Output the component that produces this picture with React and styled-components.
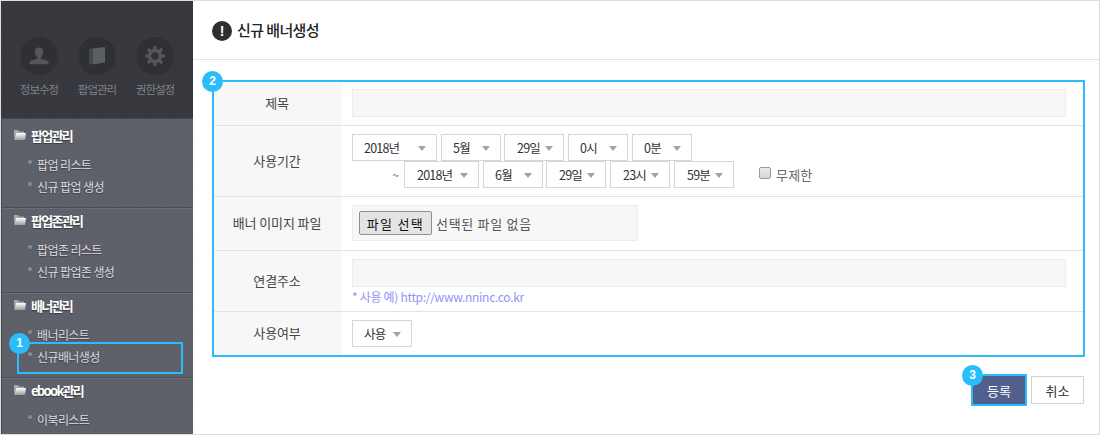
import React from "react";
import styled, { createGlobalStyle } from "styled-components";

const Global = createGlobalStyle`
  html, body { margin: 0; padding: 0; background: #fff; }
  * { box-sizing: border-box; }
  body { font-family: "Noto Sans CJK KR", "Noto Sans", sans-serif; }
`;

const Frame = styled.div`
  width: 1100px; height: 435px; display: flex; overflow: hidden;
  border: 1px solid #dedede; background: #fff;
`;

const Sidebar = styled.aside`
  width: 192px; flex: none; display: flex; flex-direction: column; overflow: hidden;
  background: #5d5f69;
`;

const Profile = styled.div`
  height: 117px; flex: none; padding: 36px 0 0 19px; display: flex; gap: 20px;
  background-color: #37383d;
  background-image: radial-gradient(#3c3d42 0.7px, transparent 0.8px);
  background-size: 3px 3px;
`;

const ProfileLink = styled.div`
  width: 38px; display: flex; flex-direction: column; align-items: center; gap: 5px;
`;

const IconDisc = styled.div`
  width: 38px; height: 38px; border-radius: 50%; background: #2f3034;
  display: flex; align-items: center; justify-content: center;
`;

const ProfileLabel = styled.span`
  font-size: 11.5px; line-height: 18px; letter-spacing: -1px; color: #7f828b; white-space: nowrap;
`;

const Nav = styled.nav`
  flex: 1; border-left: 1px solid #45464c; border-top: 1px solid #45464c;
  background-color: #5d5f69;
  background-image: radial-gradient(#62646e 0.7px, transparent 0.8px);
  background-size: 3px 3px;
`;

const SectionTitle = styled.h3`
  margin: 0; height: 18px; display: flex; align-items: center; gap: 5px;
  font-size: 13px; font-weight: 700; letter-spacing: -1.7px; color: #fff;
  text-shadow: 0 1px 1px rgba(0,0,0,.4);
`;

const ItemList = styled.ul`
  list-style: none; margin: 9px 0 0; padding: 0 0 0 16px;
`;

const Section = styled.section`
  height: 85px; padding: 3px 0 0 12px; border-bottom: 1px solid #4a4b53;
  box-shadow: 0 1px 0 #6b6d77;
  &:first-child { height: 89px; padding-top: 7px; }
`;

const Item = styled.li`
  position: relative; height: 22px; display: flex; align-items: center; padding-left: 7px;
  font-size: 12px; letter-spacing: -0.6px; color: #dcdcdf;
  text-shadow: 0 1px 1px rgba(0,0,0,.35);
  &::before {
    content: ""; position: absolute; left: -2px; top: 7px;
    width: 4px; height: 4px; border-radius: 50%; background: #8b8c94;
  }
`;

const Highlight = styled.span`
  position: absolute; left: -13px; top: -3px; width: 166px; height: 32px;
  border: 2px solid #29bdfb;
`;

const Badge = styled.span`
  position: absolute; width: 21px; height: 21px; border-radius: 50%;
  background: #29bdfb; color: #fff; font: 700 12px/21px "Liberation Sans", sans-serif;
  text-align: center; z-index: 2; text-shadow: none; letter-spacing: 0;
`;

const Main = styled.main`
  flex: 1; min-width: 0; display: flex; flex-direction: column;
`;

const Header = styled.header`
  height: 59px; flex: none; border-bottom: 1px solid #e3e3e3; padding: 20px 0 0 19px;
  display: flex; align-items: flex-start; gap: 5px;
`;

const AlertIcon = styled.span`
  width: 20px; height: 20px; border-radius: 50%; background: #2f2f2f; color: #fff;
  font: 700 14px/20px "Liberation Sans", sans-serif; text-align: center;
`;

const Title = styled.h1`
  margin: -1px 0 0; font-size: 15px; line-height: 20px; font-weight: 500; letter-spacing: -0.6px; color: #222;
`;

const FormBox = styled.div`
  position: relative; margin: 20px 14px 0 19px; height: 277px; border: 2px solid #29bdfb;
`;

const Row = styled.div`
  display: flex; height: ${p => p.$h}px; border-bottom: ${p => p.$last ? "none" : "1px solid #e3e3e3"};
`;

const Label = styled.div`
  width: 128px; flex: none; background: #f7f7f7; display: flex; align-items: center; justify-content: center;
  padding: 0 2px 2px 0;
  font-size: 13px; color: #444; letter-spacing: -0.1px;
`;

const Field = styled.div`
  flex: 1; min-width: 0; padding: ${p => p.$pad ?? 8}px 17px 0 10px;
  font-size: 13px; color: #333;
`;

const TextBox = styled.div`
  height: 28px; background: #f7f7f7; border: 1px solid #ececec;
`;

const SelectRow = styled.div`
  display: flex; gap: 4px; align-items: flex-start;
`;

const Select = styled.div`
  position: relative; width: ${p => p.$w}px; height: 27px; flex: none;
  margin-left: ${p => p.$ml ?? 0}px;
  border: 1px solid #d6d6d6; background: #fff;
  display: flex; align-items: center; padding-left: ${p => p.$pl ?? 11}px;
  font-size: 12.5px; letter-spacing: -0.8px; color: #333;
  &::after {
    content: ""; position: absolute; right: 10px; top: 11px;
    border: 4px solid transparent; border-top: 5px solid #a3a3a3; border-bottom: 0;
  }
`;

const Tilde = styled.span`
  width: 48px; flex: none; padding: 5px 1px 0 0; text-align: right; color: #666; font-size: 12px;
`;

const CheckLabel = styled.label`
  margin: 4px 0 0 21px; display: flex; align-items: center; gap: 5px;
  font-size: 13px; color: #666; letter-spacing: 0.2px;
`;

const Check = styled.span`
  width: 12px; height: 12px; margin-bottom: 3px; border: 1px solid #9a9a9a; border-radius: 2px;
  background: linear-gradient(#e9e9e9, #d6d6d6);
`;

const FileBox = styled.div`
  width: 286px; height: 36px; background: #f7f7f7; border: 1px solid #ececec;
  display: flex; align-items: center; padding: 0 0 0 6px; gap: 4px;
`;

const FileButton = styled.button`
  width: 73px; height: 24px; padding: 0; background: #e4e4e4; border: 1px solid #8f8f8f; border-radius: 2px;
  font: 13px "Noto Sans CJK KR", sans-serif; letter-spacing: 1.3px; color: #111;
`;

const FileText = styled.span`
  font-size: 13px; color: #555; letter-spacing: 0.7px;
`;

const Hint = styled.p`
  margin: 1px 0 0; font-size: 12px; line-height: 18px; color: #8f94f5; letter-spacing: -0.3px;
`;

const Actions = styled.div`
  display: flex; justify-content: flex-end; align-items: center; gap: 4px;
  margin: 17px 15px 0 0;
`;

const Primary = styled.button`
  position: relative; width: 56px; height: 32px; padding: 0; background: #525e8c;
  border: 2px solid #29bdfb; color: #fff; font: 13px "Noto Sans CJK KR", sans-serif;
`;

const Secondary = styled.button`
  width: 53px; height: 28px; padding: 0; background: #fff; border: 1px solid #d2d2d2; color: #333;
  font: 13px "Noto Sans CJK KR", sans-serif;
`;

const UserIcon = () => (
  <svg width="20" height="20" viewBox="0 0 20 20" fill="#55565d">
    <path d="M10 1.500c2.800 0 4.200 2 4.200 4.600 0 2.400-1 4.300-2.300 5.100v1.500c0 .9 7.600 .9 7.600 3.500v2H.5v-2c0-2.600 7.600-2.600 7.600-3.500v-1.500C6.800 10.400 5.800 8.500 5.800 6.100c0-2.600 1.400-4.600 4.200-4.600z" />
  </svg>
);
const BookIcon = () => (
  <svg width="18" height="20" viewBox="0 0 18 20" fill="#5c5e65">
    <path d="M1 3.500 5 1.500 5 17 1 18.500z" fill="#47484e" />
    <path d="M5 2.500 17 1v15.500L5 18.500z" />
  </svg>
);
const GearIcon = () => (
  <svg width="22" height="22" viewBox="0 0 24 24" fill="none" stroke="#55565d" strokeWidth="4">
    <circle cx="12" cy="12" r="6" />
    <path d="M12 1v4M12 19v4M1 12h4M19 12h4M4.200 4.200l2.800 2.800M17 17l2.800 2.800M4.200 19.800 7 17M17 7l2.800-2.800" strokeWidth="3.500" />
  </svg>
);
const FolderIcon = () => (
  <svg width="12" height="10" viewBox="0 0 12 10">
    <defs>
      <linearGradient id="fold" x1="0" y1="0" x2="0" y2="1">
        <stop offset="0" stopColor="#ffffff" />
        <stop offset="1" stopColor="#9c9c9c" />
      </linearGradient>
    </defs>
    <path d="M0 0h4l1 1.500h5V3H2L0 8z" fill="#a9a9a9" />
    <path d="M2 3h10l-1 7H0z" fill="url(#fold)" />
  </svg>
);

const profile = [
  ["정보수정", <UserIcon key="u" />],
  ["팝업관리", <BookIcon key="b" />],
  ["권한설정", <GearIcon key="g" />],
];

const sections = [
  { title: "팝업관리", items: ["팝업 리스트", "신규 팝업 생성"] },
  { title: "팝업존관리", items: ["팝업존 리스트", "신규 팝업존 생성"] },
  { title: "배너관리", items: ["배너리스트", "신규배너생성"], mark: 1 },
  { title: "ebook관리", items: ["이북리스트"] },
];

export default function App() {
  return (
    <>
      <Global />
      <Frame>
        <Sidebar>
          <Profile>
            {profile.map(([text, icon]) => (
              <ProfileLink key={text}>
                <IconDisc>{icon}</IconDisc>
                <ProfileLabel>{text}</ProfileLabel>
              </ProfileLink>
            ))}
          </Profile>
          <Nav>
            {sections.map(s => (
              <Section key={s.title}>
                <SectionTitle><FolderIcon />{s.title}</SectionTitle>
                <ItemList>
                  {s.items.map((it, i) => (
                    <Item key={it}>
                      {it}
                      {s.mark && i === 1 && (
                        <Highlight>
                          <Badge style={{ left: -10, top: -11 }}>1</Badge>
                        </Highlight>
                      )}
                    </Item>
                  ))}
                </ItemList>
              </Section>
            ))}
          </Nav>
        </Sidebar>
        <Main>
          <Header>
            <AlertIcon>!</AlertIcon>
            <Title>신규 배너생성</Title>
          </Header>
          <FormBox>
            <Badge style={{ left: -12, top: -11 }}>2</Badge>
            <Row $h={44}>
              <Label>제목</Label>
              <Field $pad={7}><TextBox /></Field>
            </Row>
            <Row $h={71}>
              <Label>사용기간</Label>
              <Field>
                <SelectRow>
                  <Select $w={85}>2018년</Select>
                  <Select $w={60}>5월</Select>
                  <Select $w={60} $ml={-1} $pl={12}>29일</Select>
                  <Select $w={60}>0시</Select>
                  <Select $w={60}>0분</Select>
                </SelectRow>
                <SelectRow>
                  <Tilde>~</Tilde>
                  <Select $w={75} $pl={12}>2018년</Select>
                  <Select $w={60}>6월</Select>
                  <Select $w={60} $ml={-1} $pl={12}>29일</Select>
                  <Select $w={60} $pl={12}>23시</Select>
                  <Select $w={60} $pl={12}>59분</Select>
                  <CheckLabel><Check />무제한</CheckLabel>
                </SelectRow>
              </Field>
            </Row>
            <Row $h={54}>
              <Label>배너 이미지 파일</Label>
              <Field><FileBox><FileButton>파일 선택</FileButton><FileText>선택된 파일 없음</FileText></FileBox></Field>
            </Row>
            <Row $h={61}>
              <Label>연결주소</Label>
              <Field>
                <TextBox />
                <Hint>* 사용 예) http://www.nninc.co.kr</Hint>
              </Field>
            </Row>
            <Row $h={43} $last>
              <Label>사용여부</Label>
              <Field><Select $w={60}>사용</Select></Field>
            </Row>
          </FormBox>
          <Actions>
            <Primary>
              <Badge style={{ left: -11, top: -11 }}>3</Badge>
              등록
            </Primary>
            <Secondary>취소</Secondary>
          </Actions>
        </Main>
      </Frame>
    </>
  );
}
